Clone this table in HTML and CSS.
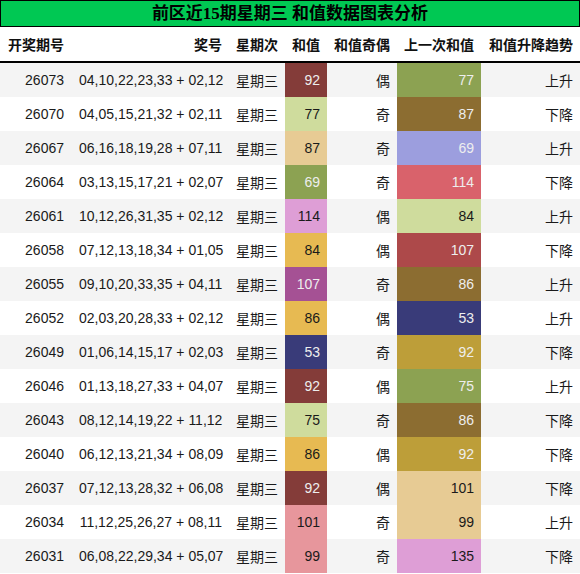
FILE: index.html
```html
<!DOCTYPE html>
<html lang="zh">
<head>
<meta charset="utf-8">
<title>前区近15期星期三 和值数据图表分析</title>
<link rel="stylesheet" href="styles.css">
</head>
<body>
<div class="wrap">
  <div class="title">前区近15期星期三 和值数据图表分析</div>
  <table class="grid">
    <colgroup>
      <col class="c1"><col class="c2"><col class="c3"><col class="c4"><col class="c5"><col class="c6"><col class="c7">
    </colgroup>
    <thead>
      <tr><th class="left">开奖期号</th><th>奖号</th><th>星期次</th><th>和值</th><th>和值奇偶</th><th>上一次和值</th><th>和值升降趋势</th></tr>
    </thead>
    <tbody>
      <tr><td>26073</td><td>04,10,22,23,33 + 02,12</td><td>星期三</td><td class="k c843c39 lt">92</td><td>偶</td><td class="k c8ca252 lt">77</td><td>上升</td></tr>
      <tr><td>26070</td><td>04,05,15,21,32 + 02,11</td><td>星期三</td><td class="k ccedb9c">77</td><td>奇</td><td class="k c8c6d31 lt">87</td><td>下降</td></tr>
      <tr><td>26067</td><td>06,16,18,19,28 + 07,11</td><td>星期三</td><td class="k ce7cb94">87</td><td>奇</td><td class="k c9c9ede lt">69</td><td>上升</td></tr>
      <tr><td>26064</td><td>03,13,15,17,21 + 02,07</td><td>星期三</td><td class="k c8ca252 lt">69</td><td>奇</td><td class="k cd6616b lt">114</td><td>下降</td></tr>
      <tr><td>26061</td><td>10,12,26,31,35 + 02,12</td><td>星期三</td><td class="k cde9ed6">114</td><td>偶</td><td class="k ccedb9c">84</td><td>上升</td></tr>
      <tr><td>26058</td><td>07,12,13,18,34 + 01,05</td><td>星期三</td><td class="k ce7ba52">84</td><td>偶</td><td class="k cad494a lt">107</td><td>下降</td></tr>
      <tr><td>26055</td><td>09,10,20,33,35 + 04,11</td><td>星期三</td><td class="k ca55194 lt">107</td><td>奇</td><td class="k c8c6d31 lt">86</td><td>上升</td></tr>
      <tr><td>26052</td><td>02,03,20,28,33 + 02,12</td><td>星期三</td><td class="k ce7ba52">86</td><td>偶</td><td class="k c393b79 lt">53</td><td>上升</td></tr>
      <tr><td>26049</td><td>01,06,14,15,17 + 02,03</td><td>星期三</td><td class="k c393b79 lt">53</td><td>奇</td><td class="k cbd9e39 lt">92</td><td>下降</td></tr>
      <tr><td>26046</td><td>01,13,18,27,33 + 04,07</td><td>星期三</td><td class="k c843c39 lt">92</td><td>偶</td><td class="k c8ca252 lt">75</td><td>上升</td></tr>
      <tr><td>26043</td><td>08,12,14,19,22 + 11,12</td><td>星期三</td><td class="k ccedb9c">75</td><td>奇</td><td class="k c8c6d31 lt">86</td><td>下降</td></tr>
      <tr><td>26040</td><td>06,12,13,21,34 + 08,09</td><td>星期三</td><td class="k ce7ba52">86</td><td>偶</td><td class="k cbd9e39 lt">92</td><td>下降</td></tr>
      <tr><td>26037</td><td>07,12,13,28,32 + 06,08</td><td>星期三</td><td class="k c843c39 lt">92</td><td>偶</td><td class="k ce7cb94">101</td><td>下降</td></tr>
      <tr><td>26034</td><td>11,12,25,26,27 + 08,11</td><td>星期三</td><td class="k ce7969c">101</td><td>奇</td><td class="k ce7cb94">99</td><td>上升</td></tr>
      <tr><td>26031</td><td>06,08,22,29,34 + 05,07</td><td>星期三</td><td class="k ce7969c">99</td><td>奇</td><td class="k cde9ed6">135</td><td>下降</td></tr>
    </tbody>
  </table>
</div>
</body>
</html>
```

FILE: styles.css
```css
html, body {
  margin: 0;
  padding: 0;
  background: #fff;
}
.wrap {
  width: 580px;
}
.title {
  box-sizing: border-box;
  height: 27px;
  border: 1px solid #000;
  background: #00c853;
  color: #000;
  font-family: "Liberation Serif", "Noto Sans CJK SC", serif;
  font-weight: bold;
  font-size: 17px;
  line-height: 25px;
  text-align: center;
}
.grid {
  width: 580px;
  border-collapse: collapse;
  table-layout: fixed;
  font-family: "Liberation Sans", "Noto Sans CJK SC", sans-serif;
  font-size: 14px;
  color: #1a1a1a;
}
.c1 { width: 72px; }
.c2 { width: 157px; }
.c3 { width: 56px; }
.c4 { width: 42px; }
.c5 { width: 70px; }
.c6 { width: 84px; }
.c7 { width: 99px; }
.grid th {
  height: 34px;
  padding: 0 7px;
  font-weight: bold;
  text-align: right;
  white-space: nowrap;
  border-bottom: 2px solid #000;
  color: #111;
}
.grid th.left {
  text-align: left;
  padding-left: 8px;
}
.grid td {
  height: 34px;
  padding: 0 7px;
  text-align: right;
  white-space: nowrap;
}
.grid td:first-child {
  padding-right: 8px;
}
.grid tbody tr:nth-child(odd) {
  background: #f4f4f4;
}
.grid tbody tr:nth-child(even) {
  background: #fff;
}
.k { color: #1a1a1a; }
.k.lt { color: #eeeeee; }
.c843c39 { background: #843c39; }
.ccedb9c { background: #cfdc9d; }
.ce7cb94 { background: #e7cb94; }
.c8ca252 { background: #8ca252; }
.cde9ed6 { background: #de9ed6; }
.ce7ba52 { background: #e7ba52; }
.ca55194 { background: #a55194; }
.c393b79 { background: #393b79; }
.ce7969c { background: #e7969c; }
.c8c6d31 { background: #8c6d31; }
.c9c9ede { background: #9c9ede; }
.cd6616b { background: #d9626b; }
.cad494a { background: #ad494a; }
.cbd9e39 { background: #bd9e39; }
```
